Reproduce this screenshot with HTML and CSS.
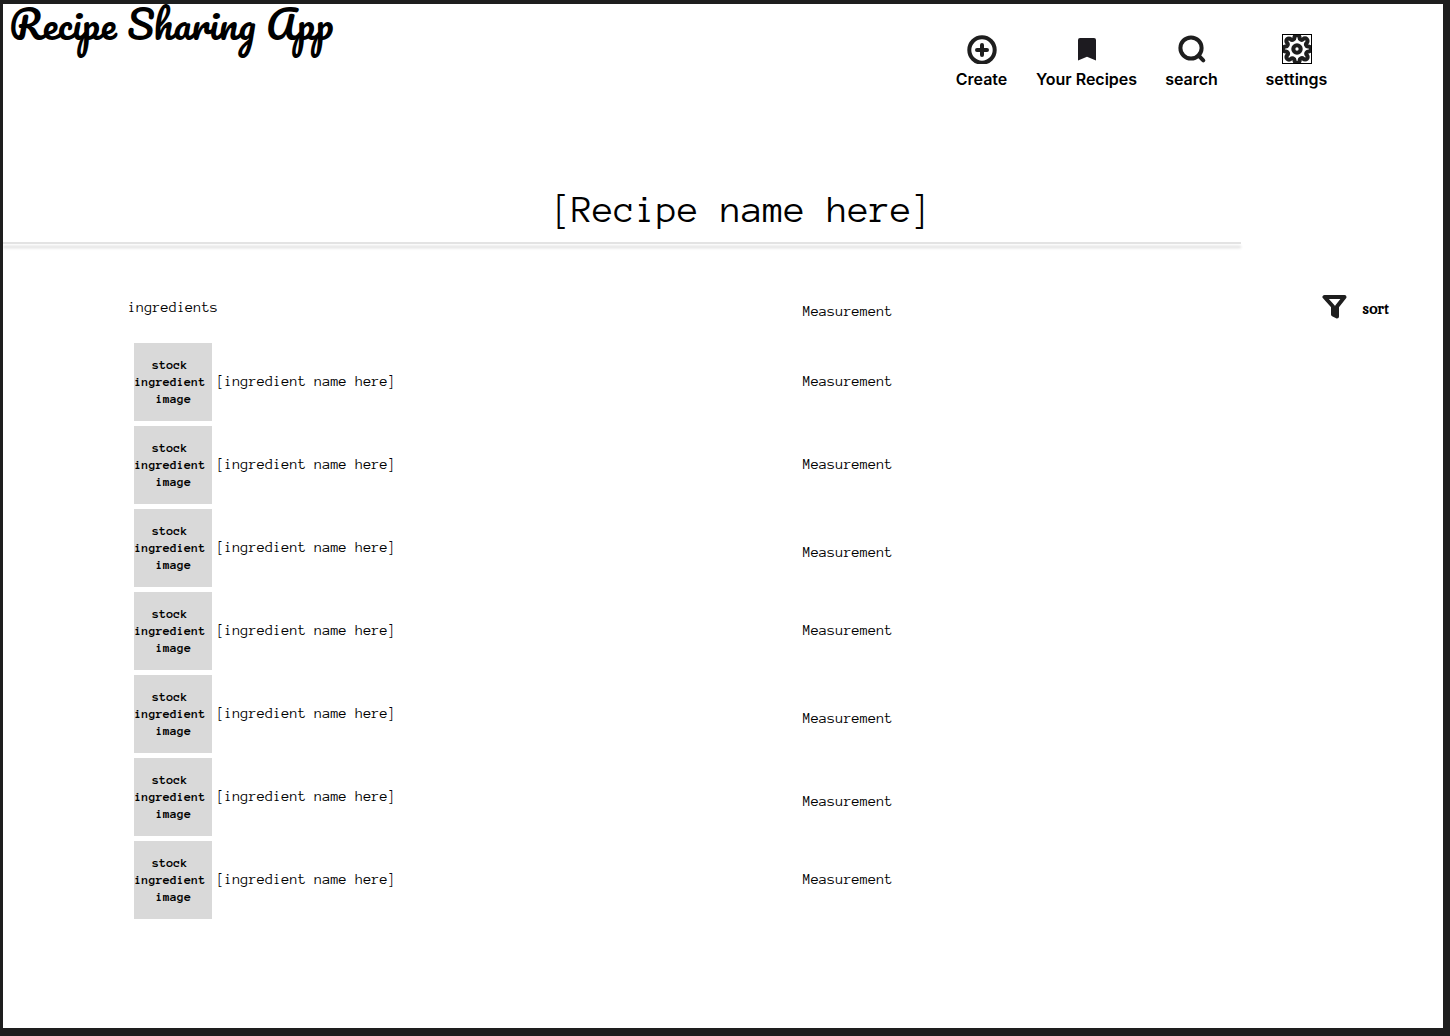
FILE: index.html
```html
<!DOCTYPE html>
<html lang="en">
<head>
  <meta charset="utf-8">
  <title>Recipe Sharing App</title>
  <link rel="stylesheet" href="styles.css">
</head>
<body>
  <header class="topbar">
    <a class="brand" href="#">Recipe Sharing App</a>
    <nav class="nav">
      <a class="nav-item" href="#">
        <svg class="icon" viewBox="0 0 30 30" fill="none" stroke="#1e1e1e" stroke-width="4" stroke-linecap="round"><circle cx="15" cy="16" r="12.700"/><path d="M15 11v10M10 16h10"/></svg>
        Create
      </a>
      <a class="nav-item" href="#">
        <svg class="icon" viewBox="0 0 30 30" fill="#1d1b20"><path d="M6 26.500V6a2 2 0 0 1 2-2h14a2 2 0 0 1 2 2v20.500l-9-3.700z"/></svg>
        Your Recipes
      </a>
      <a class="nav-item" href="#">
        <svg class="icon" viewBox="0 0 30 30" fill="none" stroke="#1e1e1e" stroke-width="4" stroke-linecap="round"><circle cx="14" cy="14" r="10.600"/><path d="M21.500 21.500l4.800 4.800"/></svg>
        search
      </a>
      <a class="nav-item" href="#">
        <svg class="icon icon-boxed" viewBox="1 1 22 22" fill="none" stroke="#1e1e1e" stroke-width="3.200" stroke-linecap="round" stroke-linejoin="round"><circle cx="12" cy="12" r="2.900"/><path d="M19.400 15a1.650 1.650 0 0 0 .33 1.820l.06.06a2 2 0 1 1-2.830 2.830l-.06-.06a1.650 1.650 0 0 0-2.820 1.180V21a2 2 0 0 1-4 0v-.09A1.650 1.650 0 0 0 9 19.400a1.650 1.650 0 0 0-1.820.33l-.06.06a2 2 0 1 1-2.830-2.830l.06-.06A1.650 1.650 0 0 0 3.170 14H3a2 2 0 0 1 0-4h.09A1.650 1.650 0 0 0 4.600 9a1.650 1.650 0 0 0-.33-1.820l-.06-.06a2 2 0 1 1 2.830-2.830l.06.06A1.650 1.650 0 0 0 9 4.680 1.650 1.650 0 0 0 10 3.170V3a2 2 0 0 1 4 0v.09a1.650 1.650 0 0 0 2.820 1.180l.06-.06a2 2 0 1 1 2.830 2.830l-.06.06A1.650 1.650 0 0 0 20.910 10H21a2 2 0 0 1 0 4h-.09a1.650 1.650 0 0 0-1.510 1z"/></svg>
        settings
      </a>
    </nav>
  </header>

  <main>
    <h1 class="title">[Recipe name here]</h1>
    <hr class="rule">

    <section class="content">
      <table class="ingredients">
        <thead>
          <tr><th class="name-col" scope="col">ingredients</th><th class="low" scope="col">Measurement</th></tr>
        </thead>
        <tbody>
          <tr><td><div class="item"><span class="thumb">stock
ingredient
&nbsp;image</span>[ingredient name here]</div></td><td>Measurement</td></tr>
          <tr><td><div class="item"><span class="thumb">stock
ingredient
&nbsp;image</span>[ingredient name here]</div></td><td>Measurement</td></tr>
          <tr><td><div class="item"><span class="thumb">stock
ingredient
&nbsp;image</span>[ingredient name here]</div></td><td class="low">Measurement</td></tr>
          <tr><td><div class="item"><span class="thumb">stock
ingredient
&nbsp;image</span>[ingredient name here]</div></td><td>Measurement</td></tr>
          <tr><td><div class="item"><span class="thumb">stock
ingredient
&nbsp;image</span>[ingredient name here]</div></td><td class="low">Measurement</td></tr>
          <tr><td><div class="item"><span class="thumb">stock
ingredient
&nbsp;image</span>[ingredient name here]</div></td><td class="low">Measurement</td></tr>
          <tr><td><div class="item"><span class="thumb">stock
ingredient
&nbsp;image</span>[ingredient name here]</div></td><td>Measurement</td></tr>
        </tbody>
      </table>
      <button class="sort" type="button">
        <svg class="funnel" viewBox="0 0 26 24" fill="none" stroke="#1e1e1e" stroke-width="4" stroke-linejoin="round"><path d="M2.500 2h20l-7.500 9.500v10l-4-2v-8z"/></svg>
        sort
      </button>
    </section>
  </main>
</body>
</html>
```
FILE: styles.css
```css
* {
  box-sizing: border-box;
}

body {
  margin: 0;
  min-height: 100vh;
  border: solid #1e1e1e;
  border-width: 4px 7px 8px 3px;
  background: #fff;
  color: #000;
  font: 15px/20px "Anonymous Pro", "Liberation Mono", monospace;
}

a {
  color: inherit;
  text-decoration: none;
}

.topbar {
  display: flex;
  justify-content: space-between;
  align-items: flex-start;
  padding: 0 94px 0 6px;
}

.brand {
  font: 400 39px/40px Pacifico, Lato, cursive;
  white-space: nowrap;
}

.nav {
  display: grid;
  grid-template-columns: repeat(4, 105px);
  padding-top: 30px;
}

.nav-item {
  display: flex;
  flex-direction: column;
  align-items: center;
  gap: 5px;
  font: 600 16px/20px Inter, sans-serif;
  white-space: nowrap;
}

.icon {
  width: 30px;
  height: 30px;
}

.icon-boxed {
  border: 1px solid #000;
}

.title {
  margin: 93px 0 0;
  padding: 0 0 4px 38px;
  font-size: 39px;
  font-weight: 400;
  line-height: 56px;
  text-align: center;
}

.rule {
  width: 86%;
  height: 2px;
  margin: 0;
  border: 0;
  background: #e3e3e3;
  box-shadow: 0 4px 3px rgba(0, 0, 0, 0.16);
}

.content {
  display: flex;
  align-items: flex-start;
  padding: 51px 54px 0 125px;
}

.ingredients {
  flex: 1;
  border-collapse: collapse;
  table-layout: fixed;
}

.ingredients th,
.ingredients td {
  padding: 0;
  font-weight: 400;
  text-align: left;
}

.ingredients th {
  height: 48px;
  padding-top: 3px;
  vertical-align: top;
}

.ingredients td {
  height: 83px;
  padding-bottom: 5px;
}

.ingredients .name-col {
  width: 56.5%;
}

.ingredients th.low {
  padding-top: 7px;
}

.ingredients td.low {
  padding: 10px 0 5px;
}

.item {
  display: flex;
  align-items: center;
  gap: 4px;
  padding-left: 6px;
}

.thumb {
  width: 78px;
  height: 78px;
  padding: 13px 6px 0 0;
  background: #d9d9d9;
  font-size: 13px;
  font-weight: 700;
  line-height: 17px;
  text-align: center;
  white-space: pre;
}

.sort {
  display: flex;
  align-items: flex-end;
  gap: 14px;
  padding: 0;
  border: 0;
  background: none;
  color: inherit;
  font: 700 15px/20px Inika, "Liberation Serif", serif;
}

.funnel {
  width: 26px;
  height: 24px;
}
```
